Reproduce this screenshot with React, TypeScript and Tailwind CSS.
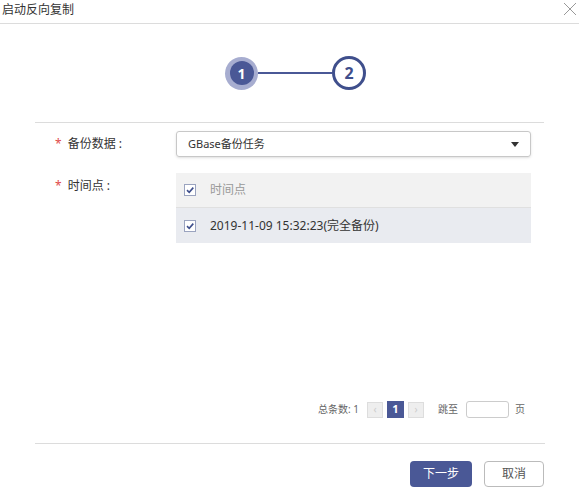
export default function App() {
  const font = { fontFamily: '"Noto Sans", "Noto Sans CJK SC", sans-serif' };
  const Check = () => (
    <span className="w-[12px] h-[12px] border border-[#9aa3bf] bg-white flex items-center justify-center">
      <svg width="10" height="10" viewBox="0 0 10 10"><path d="M2 5.2 L4.2 7.3 L8.3 2.6" stroke="#3f4f8c" strokeWidth="1.6" fill="none" /></svg>
    </span>
  );
  return (
    <div className="w-[579px] h-[500px] bg-white text-[#333] relative" style={font}>
      <div className="h-[24px] border-b border-[#dcdcdc] flex items-center justify-between pl-[2px] pr-[2px]">
        <span className="text-[12px] text-[#333] leading-none -mt-[4px]">启动反向复制</span>
        <svg width="14" height="14" viewBox="0 0 14 14" className="-mt-[6px]"><path d="M1 1 L13 13 M13 1 L1 13" stroke="#999" strokeWidth="1" /></svg>
      </div>
      <div className="flex items-center justify-center h-[98px] pl-[12px]">
        <div className="w-[33px] h-[33px] rounded-full bg-[#a7add0] flex items-center justify-center">
          <div className="w-[24px] h-[24px] rounded-full bg-[#4a5896] text-white text-[14px] font-bold flex items-center justify-center">1</div>
        </div>
        <div className="w-[74px] h-[2px] bg-[#4a5896]" />
        <div className="w-[34px] h-[34px] rounded-full border-[3px] border-[#3f4f8c] text-[#3f4f8c] text-[16px] font-bold flex items-center justify-center">2</div>
      </div>
      <div className="mx-[35px] border-t border-[#dcdcdc]" />
      <div className="mt-[8px] flex items-center">
        <div className="w-[176px] pl-[55px] text-[12px]"><span className="text-[#e04a4a] mr-[6px]">*</span>备份数据 :</div>
        <div className="w-[355px] h-[26px] border border-[#c8c8c8] rounded-[3px] flex items-center justify-between px-[11px] text-[11px] shadow-sm">
          <span>GBase备份任务</span>
          <svg width="8" height="5" viewBox="0 0 8 5"><path d="M0 0 L8 0 L4 5Z" fill="#333" /></svg>
        </div>
      </div>
      <div className="mt-[16px] flex">
        <div className="w-[176px] pl-[55px] text-[12px] pt-[4px]"><span className="text-[#e04a4a] mr-[6px]">*</span>时间点 :</div>
        <div className="w-[355px]">
          <div className="h-[35px] bg-[#f2f2f2] flex items-center px-[8px] gap-[14px] text-[12px] text-[#999] border-b border-[#e0e0e0]"><Check />时间点</div>
          <div className="h-[35px] bg-[#e9ebf0] flex items-center px-[8px] gap-[14px] text-[12px] text-[#333]"><Check />2019-11-09 15:32:23(完全备份)</div>
        </div>
      </div>
      <div className="absolute left-0 right-0 top-[401px] flex items-center text-[10px] text-[#666] pl-[318px]">
        <span>总条数: 1</span>
        <span className="ml-[8px] w-[16px] h-[16px] bg-[#eee] border border-[#ddd] flex items-center justify-center text-[#ccc]">‹</span>
        <span className="ml-[4px] w-[17px] h-[17px] bg-[#4a5896] text-white font-bold text-[11px] flex items-center justify-center">1</span>
        <span className="ml-[4px] w-[16px] h-[16px] bg-[#eee] border border-[#ddd] flex items-center justify-center text-[#ccc]">›</span>
        <span className="ml-[14px]">跳至</span>
        <span className="ml-[8px] w-[43px] h-[17px] border border-[#ccc] rounded-[3px]" />
        <span className="ml-[6px]">页</span>
      </div>
      <div className="absolute left-[35px] right-[34px] top-[443px] border-t border-[#dcdcdc]" />
      <div className="absolute top-[461px] left-[410px] flex gap-[12px] text-[12px]">
        <button className="w-[62px] h-[26px] rounded-[4px] bg-[#4a5896] text-white">下一步</button>
        <button className="w-[60px] h-[26px] rounded-[4px] border border-[#bbb] text-[#555] bg-white">取消</button>
      </div>
    </div>
  );
}
